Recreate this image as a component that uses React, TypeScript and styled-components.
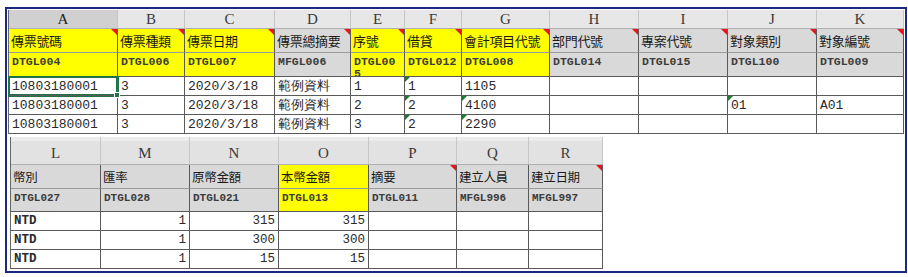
import React from "react";
import styled, { createGlobalStyle, css } from "styled-components";

const GlobalStyle = createGlobalStyle`
  html, body {
    margin: 0;
    padding: 0;
    background: #fff;
  }
  body {
    font-family: "Liberation Sans", "Noto Sans CJK TC", sans-serif;
  }
`;

type Column = {
  letter: string;
  width: number;
  label: string;
  code: string;
  yellow?: boolean;
  note?: boolean;
};

type Value = {
  text: string;
  right?: boolean;
  flag?: boolean;
  bold?: boolean;
};

const topColumns: Column[] = [
  { letter: "A", width: 109, label: "傳票號碼", code: "DTGL004", yellow: true, note: true },
  { letter: "B", width: 67, label: "傳票種類", code: "DTGL006", yellow: true, note: true },
  { letter: "C", width: 90, label: "傳票日期", code: "DTGL007", yellow: true, note: true },
  { letter: "D", width: 76, label: "傳票總摘要", code: "MFGL006", note: true },
  { letter: "E", width: 54, label: "序號", code: "DTGL00\n5", yellow: true, note: true },
  { letter: "F", width: 57, label: "借貸", code: "DTGL012", yellow: true, note: true },
  { letter: "G", width: 88, label: "會計項目代號", code: "DTGL008", yellow: true, note: true },
  { letter: "H", width: 89, label: "部門代號", code: "DTGL014", note: true },
  { letter: "I", width: 89, label: "專案代號", code: "DTGL015", note: true },
  { letter: "J", width: 89, label: "對象類別", code: "DTGL100", note: true },
  { letter: "K", width: 87, label: "對象編號", code: "DTGL009", note: true },
];

const v = (text: string, extra: Partial<Value> = {}): Value => ({ text, ...extra });

const topRows: Value[][] = [
  [v("10803180001"), v("3"), v("2020/3/18"), v("範例資料"), v("1"), v("1", { flag: true }), v("1105"), v(""), v(""), v(""), v("")],
  [v("10803180001"), v("3"), v("2020/3/18"), v("範例資料"), v("2"), v("2", { flag: true }), v("4100", { flag: true }), v(""), v(""), v("01", { flag: true }), v("A01")],
  [v("10803180001"), v("3"), v("2020/3/18"), v("範例資料"), v("3"), v("2", { flag: true }), v("2290", { flag: true }), v(""), v(""), v(""), v("")],
];

const bottomColumns: Column[] = [
  { letter: "L", width: 90, label: "幣別", code: "DTGL027" },
  { letter: "M", width: 89, label: "匯率", code: "DTGL028" },
  { letter: "N", width: 89, label: "原幣金額", code: "DTGL021" },
  { letter: "O", width: 90, label: "本幣金額", code: "DTGL013", yellow: true },
  { letter: "P", width: 88, label: "摘要", code: "DTGL011", note: true },
  { letter: "Q", width: 72, label: "建立人員", code: "MFGL996" },
  { letter: "R", width: 74, label: "建立日期", code: "MFGL997", note: true },
];

const amountRow = (amount: string): Value[] => [
  v("NTD", { bold: true }),
  v("1", { right: true }),
  v(amount, { right: true }),
  v(amount, { right: true }),
  v(""),
  v(""),
  v(""),
];

const bottomRows: Value[][] = [amountRow("315"), amountRow("300"), amountRow("15")];

const Frame = styled.div`
  box-sizing: border-box;
  margin: 7px 0 0 5px;
  width: 902px;
  height: 266px;
  border: 2px solid #1b2a80;
  padding: 1px 2px 0 1px;
  display: flex;
  flex-direction: column;
  align-items: flex-start;
  gap: 3px;
`;

const Sheet = styled.div<{ $cols: string; $rows: string; $inset?: number }>`
  display: grid;
  grid-template-columns: ${(p) => p.$cols};
  grid-template-rows: ${(p) => p.$rows};
  margin-left: ${(p) => p.$inset ?? 0}px;
  border-left: 1px solid #666;
`;

const Letter = styled.div<{ $selected?: boolean; $tall?: boolean }>`
  box-sizing: border-box;
  display: flex;
  justify-content: center;
  align-items: ${(p) => (p.$tall ? "flex-end" : "center")};
  padding-bottom: ${(p) => (p.$tall ? 2 : 0)}px;
  background: ${(p) =>
    p.$tall ? "linear-gradient(#ececec 0, #ececec 4px, #e2e2e2 4px)" : "#e7e7e7"};
  border-right: 1px solid #c6c6c6;
  border-bottom: 1px solid #b0b0b0;
  font-family: "Liberation Serif", "Times New Roman", serif;
  font-size: 15px;
  color: #3a3a3a;
  ${(p) =>
    p.$selected &&
    css`
      background: #d0d0d0;
      color: #222;
    `}
`;

const Cell = styled.div<{ $yellow?: boolean; $head?: boolean }>`
  position: relative;
  box-sizing: border-box;
  overflow: hidden;
  background: ${(p) => (p.$yellow ? "#ffff00" : p.$head ? "#d9d9d9" : "#fff")};
  border-right: 1px solid #5a5a5a;
  border-bottom: 1px solid #5a5a5a;
  color: #1a1a1a;
`;

const Label = styled(Cell)<{ $small?: boolean }>`
  display: flex;
  align-items: center;
  padding-left: 2px;
  border-bottom-color: #9a9a9a;
  font-family: "Noto Sans CJK TC", "Noto Sans CJK SC", sans-serif;
  font-size: ${(p) => (p.$small ? 12.5 : 13)}px;
  letter-spacing: -0.3px;
  white-space: nowrap;
`;

const Code = styled(Cell)<{ $small?: boolean }>`
  padding: 3px 0 0 3px;
  font-family: "Liberation Mono", "Courier New", monospace;
  font-weight: bold;
  font-size: ${(p) => (p.$small ? 11 : 11.5)}px;
  line-height: 12px;
  white-space: pre-line;
  color: #3c3c3c;
`;

const Data = styled(Cell)<{ $right?: boolean; $bold?: boolean; $small?: boolean; $active?: boolean }>`
  display: flex;
  align-items: center;
  justify-content: ${(p) => (p.$right ? "flex-end" : "flex-start")};
  padding: 0 3px;
  font-family: "Liberation Mono", "Courier New", monospace;
  font-size: ${(p) => (p.$small ? 12.5 : 13)}px;
  font-weight: ${(p) => (p.$bold ? "bold" : "normal")};
  color: #2a2a2a;
  white-space: nowrap;
  ${(p) =>
    p.$active &&
    css`
      overflow: visible;
      box-shadow: inset 0 0 0 1px #217346, 0 0 0 1px #217346;
      z-index: 1;
      &::after {
        content: "";
        position: absolute;
        right: -3px;
        bottom: -3px;
        width: 4px;
        height: 4px;
        background: #217346;
        border: 1px solid #fff;
      }
    `}
`;

const NoteMark = styled.span`
  position: absolute;
  top: 0;
  right: 0;
  width: 0;
  height: 0;
  border-top: 6px solid #e8151b;
  border-left: 6px solid transparent;
`;

const FlagMark = styled.span`
  position: absolute;
  top: 0;
  left: 0;
  width: 0;
  height: 0;
  border-top: 5px solid #1e7b34;
  border-right: 5px solid transparent;
`;

type SheetProps = {
  columns: Column[];
  rows: Value[][];
  rowHeights: string;
  small?: boolean;
  inset?: number;
  activeCol?: number;
};

const SheetBlock: React.FC<SheetProps> = ({ columns, rows, rowHeights, small, inset, activeCol }) => (
  <Sheet $cols={columns.map((c) => `${c.width}px`).join(" ")} $rows={rowHeights} $inset={inset}>
    {columns.map((c, i) => (
      <Letter key={`l${c.letter}`} $selected={i === activeCol} $tall={small}>
        {c.letter}
      </Letter>
    ))}
    {columns.map((c) => (
      <Label key={`h${c.letter}`} $yellow={c.yellow} $head $small={small}>
        {c.label}
        {c.note && <NoteMark />}
      </Label>
    ))}
    {columns.map((c) => (
      <Code key={`c${c.letter}`} $yellow={c.yellow} $head $small={small}>
        {c.code}
      </Code>
    ))}
    {rows.map((row, r) =>
      row.map((cell, i) => (
        <Data
          key={`d${r}-${i}`}
          $right={cell.right}
          $bold={cell.bold}
          $small={small}
          $active={r === 0 && i === activeCol}
        >
          {cell.flag && <FlagMark />}
          {cell.text}
        </Data>
      ))
    )}
  </Sheet>
);

function App() {
  return (
    <>
      <GlobalStyle />
      <Frame>
        <SheetBlock
          columns={topColumns}
          rows={topRows}
          rowHeights="19px 24px 24px 19px 19px 19px"
          activeCol={0}
        />
        <SheetBlock
          columns={bottomColumns}
          rows={bottomRows}
          rowHeights="28px 24px 23px 19px 19px 19px"
          small
          inset={2}
        />
      </Frame>
    </>
  );
}

export default App;
